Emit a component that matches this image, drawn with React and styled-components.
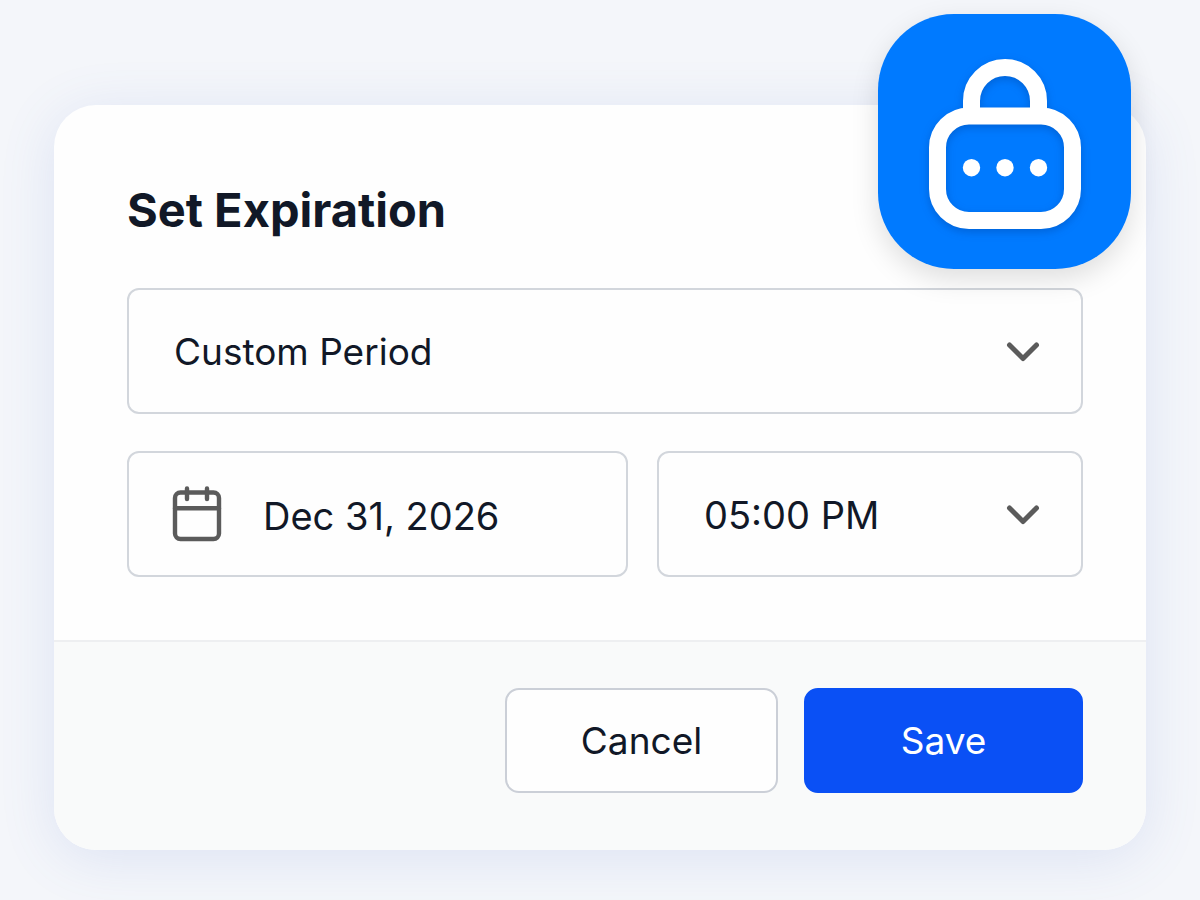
import React from "react";
import styled, { createGlobalStyle } from "styled-components";

const GlobalStyle = createGlobalStyle`
  *, *::before, *::after { box-sizing: border-box; }
  body {
    margin: 0;
    background: #f4f6fa;
    color: #111827;
    font-family: Inter, "Liberation Sans", sans-serif;
  }
`;

const Page = styled.main`
  min-height: 100vh;
  padding: 105px 54px 49px;
`;

const Card = styled.form`
  position: relative;
  border-radius: 42px;
  background: #fefefe;
  box-shadow: 0 8px 56px rgba(84, 112, 208, 0.14);
`;

const Body = styled.div`
  padding: 77px 63px 63px 73px;
`;

const Title = styled.h1`
  margin: 0 0 50px;
  font-size: 47px;
  line-height: 56px;
  font-weight: 700;
`;

const Fields = styled.div`
  display: grid;
  grid-template-columns: 501fr 426fr;
  gap: 37px 29px;
`;

const Field = styled.label`
  position: relative;
  display: flex;
  align-items: center;
  grid-column: ${(p) => (p.$wide ? "1 / -1" : "auto")};
  min-width: 0;
`;

const controlStyle = `
  width: 100%;
  min-width: 0;
  height: 126px;
  margin: 0;
  border: 2px solid #d2d6dc;
  border-radius: 12px;
  background: transparent;
  color: #111827;
  font: 400 38px/48px Inter, "Liberation Sans", sans-serif;
  outline-color: #0a50f5;
`;

const Select = styled.select`
  ${controlStyle}
  appearance: none;
  padding: 2px 100px 0 45px;
  font-size: ${(p) => (p.$compact ? "37px" : "38px")};
`;

const Input = styled.input`
  ${controlStyle}
  padding: 3px 20px 0 134px;
`;

const ChevronSlot = styled.svg`
  position: absolute;
  right: 40px;
  width: 40px;
  height: 40px;
  pointer-events: none;
`;

const CalendarSlot = styled.svg`
  position: absolute;
  left: 44px;
  width: 52px;
  height: 60px;
  pointer-events: none;
`;

const Footer = styled.footer`
  display: flex;
  justify-content: flex-end;
  gap: 26px;
  padding: 46px 63px 57px;
  border-top: 2px solid #eeeff1;
  border-radius: 0 0 42px 42px;
  background: #f9fafa;
`;

const Button = styled.button`
  width: ${(p) => (p.$primary ? "279px" : "273px")};
  height: 105px;
  padding: 0;
  border: 2px solid ${(p) => (p.$primary ? "#0a50f5" : "#cbcfd7")};
  border-radius: 14px;
  background: ${(p) => (p.$primary ? "#0a50f5" : "#fefefe")};
  color: ${(p) => (p.$primary ? "#fff" : "#111827")};
  font: 400 37px/48px Inter, "Liberation Sans", sans-serif;
`;

const Badge = styled.div`
  position: absolute;
  top: -91px;
  right: 15px;
  width: 253px;
  height: 255px;
  border-radius: 76px;
  background: #007aff;
  box-shadow: 0 10px 28px rgba(0, 0, 0, 0.13);
  pointer-events: none;
`;

const LockSvg = styled.svg`
  display: block;
  width: 100%;
  height: 100%;
`;

const LockOutline = styled.g`
  filter: drop-shadow(0 3px 4px rgba(0, 40, 110, 0.28));
`;

function Chevron() {
  return (
    <ChevronSlot viewBox="0 0 40 40" fill="none" stroke="#5b5b5b" strokeWidth="5" strokeLinecap="round" strokeLinejoin="round" aria-hidden="true">
      <path d="M6.500 14 20 27.500 33.500 14" />
    </ChevronSlot>
  );
}

function Calendar() {
  return (
    <CalendarSlot viewBox="0 0 52 60" fill="none" stroke="#5b5b5b" strokeWidth="4.400" strokeLinecap="round" aria-hidden="true">
      <rect x="4" y="8.500" width="44" height="46.500" rx="5.500" />
      <path d="M4 24.200h44M16 4.500v10.500M36 4.500v10.500" />
    </CalendarSlot>
  );
}

function Lock() {
  return (
    <LockSvg viewBox="0 0 253 255" fill="none" stroke="#fff" strokeWidth="17" aria-hidden="true">
      <LockOutline>
        <rect x="59.500" y="102" width="135" height="104.500" rx="31.500" />
        <path d="M93.500 102V87a33.500 33.500 0 0 1 67 0v15" />
      </LockOutline>
      <g fill="#fff" stroke="none">
        <circle cx="93.500" cy="153.700" r="8.700" />
        <circle cx="127" cy="153.700" r="8.700" />
        <circle cx="160.500" cy="153.700" r="8.700" />
      </g>
    </LockSvg>
  );
}

export default function App() {
  return (
    <>
      <GlobalStyle />
      <Page>
        <Card aria-labelledby="expiration-title" onSubmit={(e) => e.preventDefault()}>
          <Body>
            <Title id="expiration-title">Set Expiration</Title>
            <Fields>
              <Field $wide>
                <Select $compact aria-label="Period" defaultValue="custom">
                  <option value="custom">Custom Period</option>
                </Select>
                <Chevron />
              </Field>
              <Field>
                <Calendar />
                <Input type="text" aria-label="Date" defaultValue="Dec 31, 2026" />
              </Field>
              <Field>
                <Select aria-label="Time" defaultValue="17:00">
                  <option value="17:00">05:00 PM</option>
                </Select>
                <Chevron />
              </Field>
            </Fields>
          </Body>
          <Footer>
            <Button type="button">Cancel</Button>
            <Button type="submit" $primary>Save</Button>
          </Footer>
          <Badge>
            <Lock />
          </Badge>
        </Card>
      </Page>
    </>
  );
}
